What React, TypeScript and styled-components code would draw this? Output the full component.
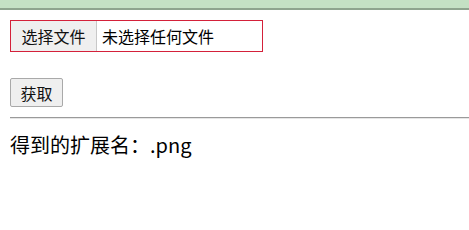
import React from "react";
import styled, { createGlobalStyle } from "styled-components";

const Global = createGlobalStyle`
  html, body { margin: 0; padding: 0; background: #fff; }
  body { font-family: "Noto Sans CJK SC", "Noto Sans", sans-serif; color: #000; }
`;

const TopBar = styled.div`
  height: 8px;
  background: #c4e1c4;
  border-bottom: 2px solid #8ea48e;
`;

const Content = styled.div`
  padding: 10px 0 0 10px;
`;

const FileBox = styled.label`
  display: flex;
  align-items: stretch;
  width: 251px;
  height: 30px;
  border: 1px solid #d4213a;
  font-size: 16px;
  line-height: 30px;
`;

const FileButton = styled.span`
  display: flex;
  align-items: center;
  justify-content: center;
  width: 85px;
  background: #efefef;
  border-right: 1px solid #c8c8c8;
  color: #111;
`;

const FileText = styled.span`
  display: flex;
  align-items: center;
  padding-left: 5px;
  color: #000;
`;

const Button = styled.button`
  display: flex;
  align-items: center;
  justify-content: center;
  margin-top: 26px;
  width: 53px;
  height: 29px;
  padding: 0;
  font-family: "Noto Sans CJK SC", sans-serif;
  font-size: 16px;
  color: #111;
  background: #efefef;
  border: 1px solid #a9a9a9;
  border-radius: 2px;
`;

const Rule = styled.hr`
  margin: 10px 0 0 0;
  height: 0;
  border: none;
  border-top: 1px solid #9a9a9a;
  border-bottom: 1px solid #e6e6e6;
`;

const Result = styled.div`
  margin-top: 12px;
  font-size: 20px;
  line-height: 28px;
  color: #000;
`;

export default function App() {
  return (
    <>
      <Global />
      <TopBar />
      <Content>
        <FileBox>
          <FileButton>选择文件</FileButton>
          <FileText>未选择任何文件</FileText>
        </FileBox>
        <Button>获取</Button>
        <Rule />
        <Result>得到的扩展名：.png</Result>
      </Content>
    </>
  );
}
